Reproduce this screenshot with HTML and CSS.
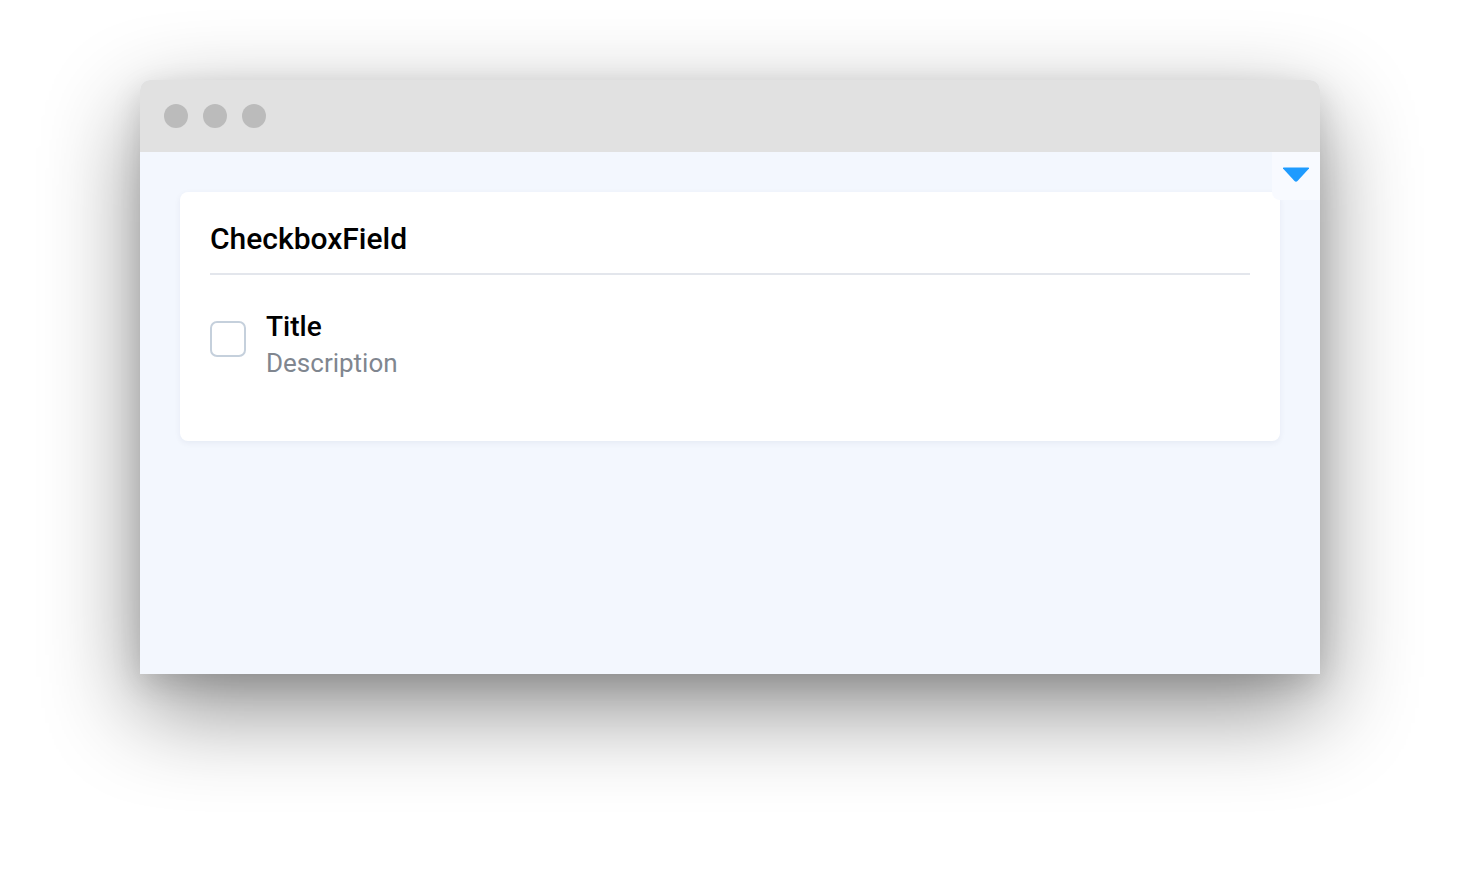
FILE: index.html
```html
<!DOCTYPE html>
<html>
<head>
<meta charset="utf-8">
<link rel="stylesheet" href="styles.css">
</head>
<body>
<div class="stage">
  <div class="window">
    <div class="titlebar">
      <span class="dot"></span>
      <span class="dot"></span>
      <span class="dot"></span>
    </div>
    <div class="content">
      <button class="toggle" aria-label="toggle">
        <svg width="28" height="16" viewBox="0 0 28 16"><path d="M1 1.5 Q0.5 0.5 2 0.5 H26 Q27.5 0.5 27 1.5 L15.5 14 Q14 15.5 12.5 14 Z" fill="#1e9bff"/></svg>
      </button>
      <div class="card">
        <h1 class="card-title">CheckboxField</h1>
        <div class="field">
          <span class="checkbox"></span>
          <div class="field-text">
            <div class="field-title">Title</div>
            <div class="field-desc">Description</div>
          </div>
        </div>
      </div>
    </div>
  </div>
</div>
</body>
</html>
```
FILE: styles.css
```css
html, body {
  margin: 0;
  padding: 0;
  background: #ffffff;
}
body {
  font-family: Roboto, "Liberation Sans", sans-serif;
  width: 1460px;
  height: 874px;
  overflow: hidden;
}
.stage {
  padding: 80px 0 0 140px;
}
.window {
  width: 1180px;
  height: 594px;
  border-radius: 10px 10px 0 0;
  display: flex;
  flex-direction: column;
  box-shadow: 0 34px 95px rgba(0, 0, 0, 0.46), 0 10px 30px rgba(0, 0, 0, 0.12);
  background: #f3f7fe;
}
.titlebar {
  height: 72px;
  flex: none;
  background: #e1e1e1;
  border-radius: 10px 10px 0 0;
  display: flex;
  align-items: center;
  padding-left: 24px;
  gap: 15px;
}
.dot {
  width: 24px;
  height: 24px;
  border-radius: 50%;
  background: #bbbbbb;
}
.content {
  flex: 1;
  position: relative;
  padding: 40px;
  background: #f3f7fe;
}
.toggle {
  position: absolute;
  top: 0;
  right: 0;
  width: 48px;
  height: 48px;
  border: none;
  padding: 0;
  margin: 0;
  background: #f8faff;
  border-radius: 0 0 0 8px;
  display: flex;
  align-items: center;
  justify-content: center;
  padding-bottom: 2px;
}
.card {
  background: #ffffff;
  border-radius: 8px;
  box-shadow: 0 2px 6px rgba(20, 40, 90, 0.06);
  padding: 26px 30px 60px;
}
.card-title {
  margin: 0;
  font-size: 30px;
  font-weight: 500;
  line-height: 42px;
  color: #000000;
  padding-bottom: 13px;
  border-bottom: 2px solid #e3e6ec;
}
.field {
  display: flex;
  align-items: flex-start;
  margin-top: 34px;
  gap: 20px;
}
.checkbox {
  width: 32px;
  height: 32px;
  border: 2px solid #c5d0dc;
  border-radius: 7px;
  margin-top: 12px;
  flex: none;
}
.field-title {
  font-size: 28px;
  font-weight: 500;
  line-height: 36px;
  color: #000000;
}
.field-desc {
  font-size: 26px;
  line-height: 36px;
  color: #80868f;
}
```
